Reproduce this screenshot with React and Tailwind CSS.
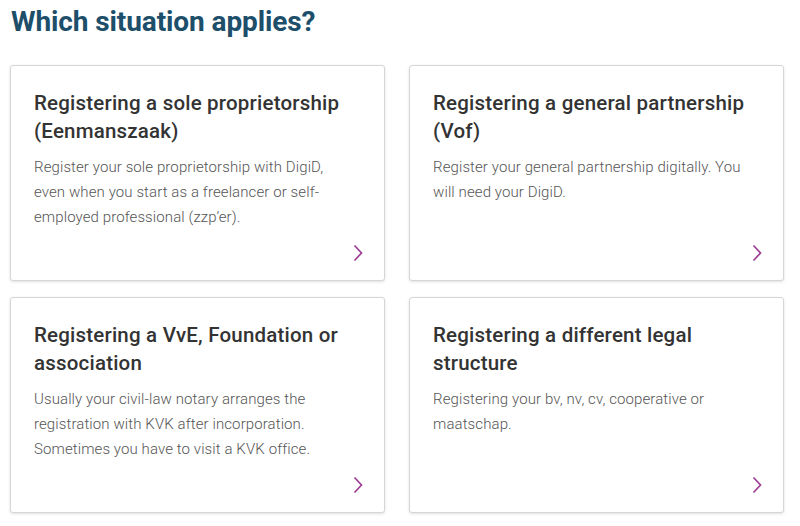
const cards = [
  {
    title: 'Registering a sole proprietorship (Eenmanszaak)',
    copy: 'Register your sole proprietorship with DigiD, even when you start as a freelancer or self-employed professional (zzp\u2019er).',
  },
  {
    title: 'Registering a general partnership (Vof)',
    copy: 'Register your general partnership digitally. You will need your DigiD.',
  },
  {
    title: 'Registering a VvE, Foundation or association',
    copy: 'Usually your civil-law notary arranges the registration with KVK after incorporation. Sometimes you have to visit a KVK office.',
  },
  {
    title: 'Registering a different legal structure',
    copy: 'Registering your bv, nv, cv, cooperative or maatschap.',
  },
];

function Chevron() {
  return (
    <svg width="10" height="18" viewBox="0 0 10 18" fill="none" className="text-[#9c3d92]">
      <path d="M1.5 1.5 8.5 9l-7 7.5" stroke="currentColor" strokeWidth="1.7" />
    </svg>
  );
}

export default function App() {
  return (
    <div className="min-h-[526px] w-[800px] bg-white pl-[10px] pr-[16px] pt-[4px] font-['Roboto',sans-serif]">
      <h1 className="mb-[25px] pl-px text-[28px] font-bold leading-[36px] tracking-[-0.1px] text-[#1d4f6b]">
        Which situation applies?
      </h1>
      <div className="grid grid-cols-2 gap-x-[24px] gap-y-[16px]">
        {cards.map((card) => (
          <a
            key={card.title}
            href="#"
            className="flex h-[216px] flex-col rounded-[3px] border border-[#d6d6d6] bg-white pl-[23px] pr-[36px] pt-[23px] pb-[18px] shadow-[0_1px_3px_rgba(0,0,0,0.12)]"
          >
            <h2 className="text-[20.5px] font-medium leading-[28px] tracking-[0.2px] text-[#333]">{card.title}</h2>
            <p className="mt-[10px] text-[15px] font-light leading-[25px] tracking-[0.1px] text-[#555]">{card.copy}</p>
            <span className="mt-auto -mr-[15px] flex justify-end">
              <Chevron />
            </span>
          </a>
        ))}
      </div>
    </div>
  );
}
